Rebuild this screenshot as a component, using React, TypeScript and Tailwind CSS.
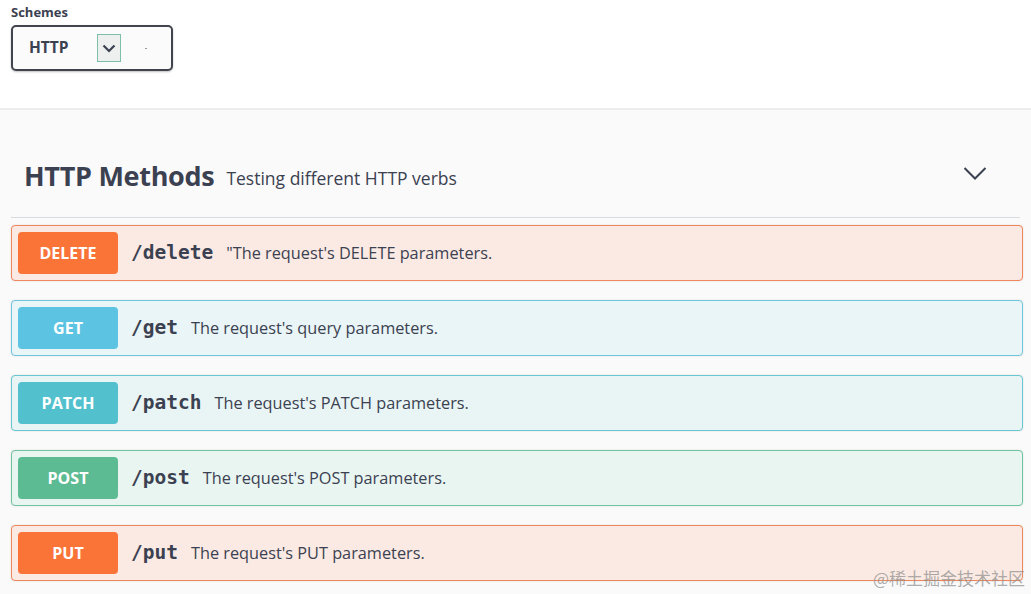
import React from "react";

type Op = { method: string; path: string; desc: string; badge: string; bg: string; border: string };

const ops: Op[] = [
  { method: "DELETE", path: "/delete", desc: "\"The request's DELETE parameters.", badge: "bg-[#fb7437]", bg: "bg-[#fbeae3]", border: "border-[#f0875b]" },
  { method: "GET", path: "/get", desc: "The request's query parameters.", badge: "bg-[#5cc4e2]", bg: "bg-[#e9f5f6]", border: "border-[#6fc6dd]" },
  { method: "PATCH", path: "/patch", desc: "The request's PATCH parameters.", badge: "bg-[#53c1cd]", bg: "bg-[#e9f5f4]", border: "border-[#68c6d0]" },
  { method: "POST", path: "/post", desc: "The request's POST parameters.", badge: "bg-[#5dbb93]", bg: "bg-[#e9f5f1]", border: "border-[#6fc3a0]" },
  { method: "PUT", path: "/put", desc: "The request's PUT parameters.", badge: "bg-[#fb7437]", bg: "bg-[#fbeae3]", border: "border-[#f0875b]" },
];

export default function App() {
  return (
    <div className="relative w-[1031px] h-[594px] overflow-hidden bg-[#fafafa] text-[#3b4151]" style={{ fontFamily: '"Open Sans", "Noto Sans", sans-serif' }}>
      <div className="bg-white h-[110px] border-b-2 border-[#ececec] px-[11px] pt-[4px]">
        <div className="text-[13px] font-bold leading-[17px] text-[#3b4151]">Schemes</div>
        <div className="mt-[4px] w-[162px] h-[46px] border-2 border-[#41444e] rounded-[5px] shadow-[0_1px_2px_rgba(0,0,0,0.25)] flex items-center bg-[#fbfbfb]">
          <span className="ml-[16px] text-[15.5px] font-bold text-[#3b4151]">HTTP</span>
          <div className="ml-[28px] w-[24px] h-[28px] border border-[#7dbfa9] bg-[#eeefef] flex items-center justify-center">
            <svg width="14" height="9" viewBox="0 0 14 9" fill="none">
              <path d="M1.5 1.5 L7 7 L12.5 1.5" stroke="#3b4151" strokeWidth="2.2" />
            </svg>
          </div>
          <div className="ml-[24px] w-[2px] h-[1px] bg-[#999]" />
        </div>
      </div>
      <div className="px-[11px]">
        <div className="h-[108px] border-b border-[#d6dcdf] flex items-end pl-[13px] pb-[23px]">
          <span className="text-[27px] leading-[36px] font-bold tracking-[-0.3px] text-[#3b4151]">HTTP Methods</span>
          <span className="ml-[12px] mb-[3px] text-[17.5px] leading-[26px] text-[#3b4151]">Testing different HTTP verbs</span>
          <svg className="ml-auto mr-[33px] mb-[13px]" width="24" height="15" viewBox="0 0 24 15" fill="none">
            <path d="M1.5 2 L12 12.5 L22.5 2" stroke="#3b4151" strokeWidth="2" />
          </svg>
        </div>
        <div className="pt-[7px]">
          {ops.map((op) => (
            <div key={op.method} className={`mb-[19px] h-[56px] w-[1012px] rounded-[4px] border ${op.border} ${op.bg} flex items-center px-[6px] shadow-[0_0_2px_rgba(0,0,0,0.12)]`}>
              <div className={`w-[100px] h-[42px] rounded-[4px] ${op.badge} flex items-center justify-center text-white text-[16px] font-bold`}>
                {op.method}
              </div>
              <span className="ml-[13px] text-[19.5px] font-bold text-[#3b4151]" style={{ fontFamily: '"DejaVu Sans Mono", monospace' }}>{op.path}</span>
              <span className="ml-[13px] text-[16.3px] text-[#3b4151]">{op.desc}</span>
            </div>
          ))}
        </div>
      </div>
      <div className="absolute right-[6px] bottom-[4px] text-[17px] text-[#8a8a8a]/70" style={{ fontFamily: '"Noto Sans CJK SC", sans-serif' }}>@稀土掘金技术社区</div>
    </div>
  );
}
